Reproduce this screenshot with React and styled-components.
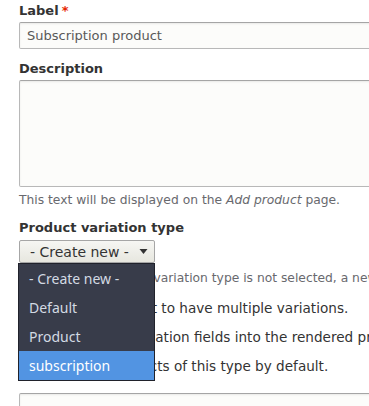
import React from 'react';
import styled, { createGlobalStyle } from 'styled-components';

const GlobalStyle = createGlobalStyle`
  html, body {
    margin: 0;
    padding: 0;
    background: #fff;
    overflow: hidden;
  }
  body {
    font-family: "DejaVu Sans", "Liberation Sans", sans-serif;
    color: #333;
  }
`;

const Page = styled.div`
  padding: 2px 0 0 19px;
  width: 369px;
  height: 406px;
  box-sizing: border-box;
  overflow: hidden;
`;

const FieldLabel = styled.label`
  display: block;
  font-size: 13px;
  font-weight: bold;
  line-height: 18px;
  color: #333;
  margin-top: ${p => p.$top || 0}px;
  margin-bottom: ${p => p.$bottom || 2}px;
  white-space: nowrap;
`;

const Required = styled.span`
  color: #e62600;
  margin-left: 3px;
`;

const TextInput = styled.div`
  box-sizing: border-box;
  width: 420px;
  height: ${p => p.$height || 27}px;
  border: 1px solid #b8b8b8;
  border-top-color: #a5a5a5;
  border-radius: 2px;
  background: #fcfcfa;
  box-shadow: inset 0 1px 2px rgba(0, 0, 0, 0.08);
  padding: 0 7px;
  font-size: 13px;
  line-height: 25px;
  color: #595959;
  white-space: nowrap;
  margin-top: ${p => p.$top || 0}px;
`;

const Help = styled.div`
  font-size: 12.3px;
  line-height: 16px;
  color: #68696e;
  margin-top: ${p => p.$top || 0}px;
  white-space: nowrap;
  em {
    font-style: italic;
  }
`;

const SelectWrap = styled.div`
  position: relative;
  width: 136px;
`;

const SelectButton = styled.div`
  box-sizing: border-box;
  width: 136px;
  height: 23px;
  border: 1px solid #a6a6a6;
  border-radius: 2px;
  background: linear-gradient(#f6f6f3, #e7e7df);
  display: flex;
  align-items: center;
  justify-content: space-between;
  padding: 0 6px 0 10px;
  font-size: 14px;
  color: #333;
`;

const Arrow = styled.svg`
  width: 9px;
  height: 7px;
`;

const Menu = styled.ul`
  position: absolute;
  top: 23px;
  left: -1px;
  z-index: 10;
  box-sizing: border-box;
  width: 137px;
  margin: 0;
  padding: 0;
  list-style: none;
  background: #383c4a;
  border: 1px solid #20222b;
  font-family: "Noto Sans", "Open Sans", sans-serif;
  font-size: 14px;
`;

const MenuItem = styled.li`
  height: 29px;
  line-height: 29px;
  padding-left: 10px;
  color: ${p => (p.$active ? '#ffffff' : '#d3dae3')};
  background: ${p => (p.$active ? '#5294e2' : 'transparent')};
  white-space: nowrap;
`;

const CheckRow = styled.div`
  height: 29px;
  display: flex;
  align-items: center;
  font-size: 13.6px;
  color: #333;
  white-space: nowrap;
  margin-top: ${p => p.$top || 0}px;
  padding-left: ${p => p.$indent || 0}px;
`;

const Box = styled.span`
  width: 6px;
  height: 13px;
  flex: none;
`;

const options = ['- Create new -', 'Default', 'Product', 'subscription'];

export default function App() {
  return (
    <Page>
      <GlobalStyle />
      <FieldLabel>
        Label<Required>*</Required>
      </FieldLabel>
      <TextInput>Subscription product</TextInput>

      <FieldLabel $top={11}>Description</FieldLabel>
      <TextInput $height={107} />
      <Help $top={5}>
        This text will be displayed on the <em>Add product</em> page.
      </Help>

      <FieldLabel $top={11} $bottom={3}>Product variation type</FieldLabel>
      <SelectWrap>
        <SelectButton>
          <span>- Create new -</span>
          <Arrow viewBox="0 0 9 7">
            <path d="M0.5 1 H8.5 L4.5 6 Z" fill="#333" />
          </Arrow>
        </SelectButton>
        <Menu>
          {options.map(o => (
            <MenuItem key={o} $active={o === 'subscription'}>
              {o}
            </MenuItem>
          ))}
        </Menu>
      </SelectWrap>
      <Help $top={7}>
        If an existing product variation type is not selected, a new one will be created.
      </Help>

      <CheckRow $top={7} $indent={2}>
        <Box />
        Allow each product to have multiple variations.
      </CheckRow>
      <CheckRow $indent={6}>
        <Box />
        Inject product variation fields into the rendered product.
      </CheckRow>
      <CheckRow $indent={-8}>
        <Box />
        Publish new products of this type by default.
      </CheckRow>

      <TextInput $top={13} />
    </Page>
  );
}
